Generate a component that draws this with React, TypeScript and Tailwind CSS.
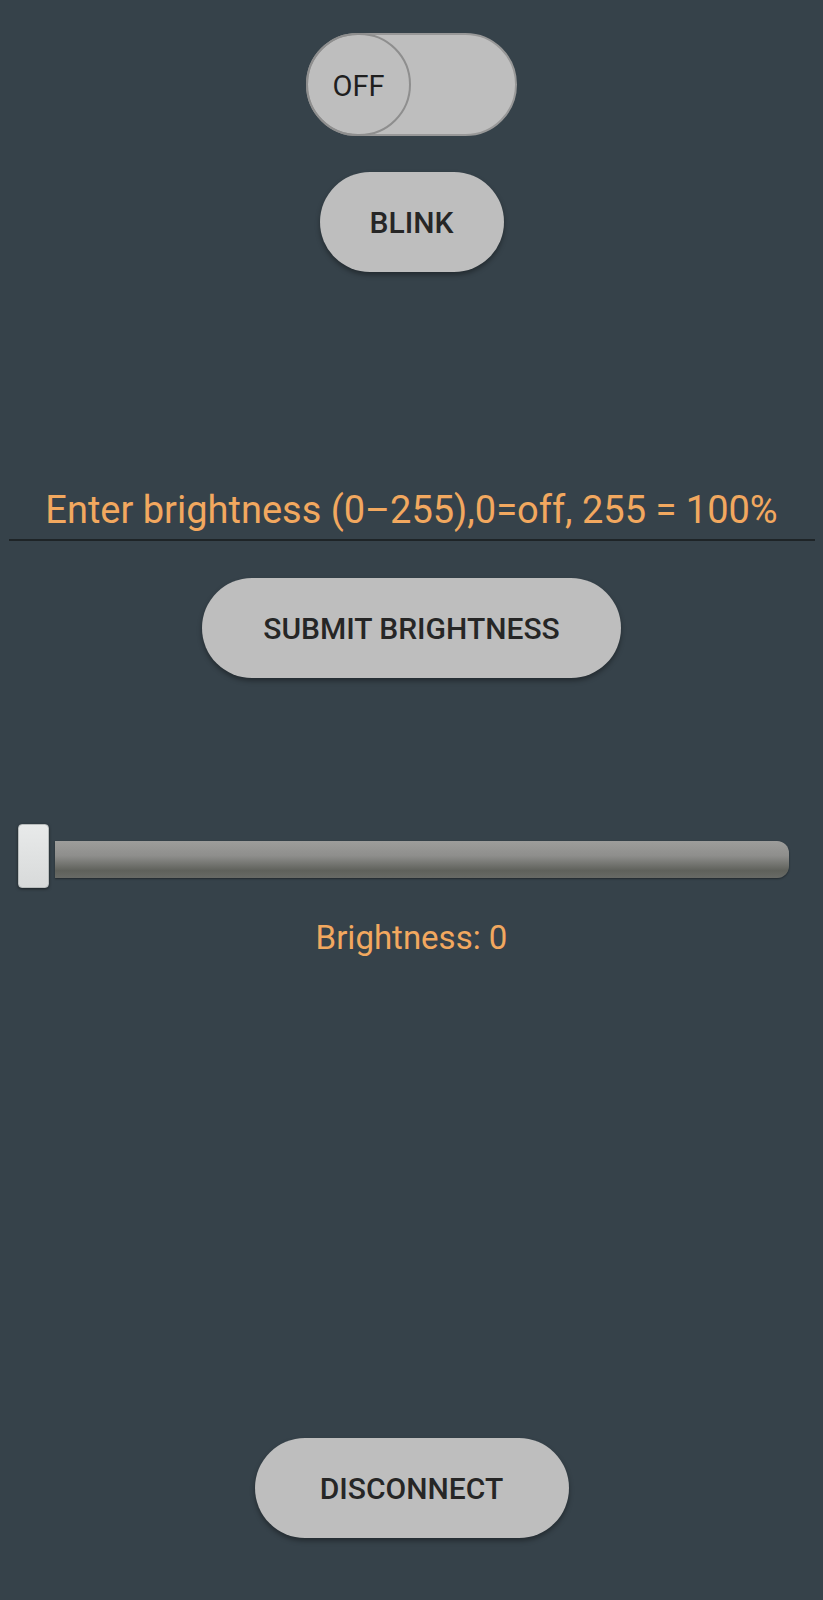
import { useState } from 'react'

function PillButton({ label, width }: { label: string; width: string }) {
  return (
    <button
      className={`${width} h-[100px] rounded-full bg-[#bebebe] text-[#262626] text-[30px] font-medium tracking-[0px] shadow-[0_3px_5px_rgba(0,0,0,0.35)]`}
    >
      {label}
    </button>
  )
}

export default function App() {
  const [value, setValue] = useState(0)
  const [on, setOn] = useState(false)

  return (
    <div
      className="min-h-screen w-full bg-[#36424a] flex flex-col items-center"
      style={{ fontFamily: 'Roboto, "Liberation Sans", sans-serif' }}
    >
      {/* toggle */}
      <button
        onClick={() => setOn(!on)}
        className="mt-[33px] w-[211px] h-[103px] rounded-full bg-[#bebebe] border-2 border-[#989898] flex items-center"
      >
        <span className="-ml-[2px] w-[105px] h-[103px] pt-[5px] rounded-full border-2 border-[#8e8e8e] flex items-center justify-center text-[29px] text-[#1f1f1f]">
          {on ? 'ON' : 'OFF'}
        </span>
      </button>

      <div className="mt-[36px]">
        <PillButton label="BLINK" width="w-[184px]" />
      </div>

      {/* brightness input */}
      <div className="mt-[209px] w-[806px] h-[60px] border-b-2 border-[#1e2427] flex items-center justify-center">
        <span className="text-[38px] text-[#f2a85f] leading-none">
          Enter brightness (0–255),0=off, 255 = 100%
        </span>
      </div>

      <div className="mt-[37px]">
        <PillButton label="SUBMIT BRIGHTNESS" width="w-[419px]" />
      </div>

      {/* slider */}
      <div className="mt-[146px] w-full h-[64px] flex items-start pl-[18px] pr-[34px]">
        <div className="w-[31px] h-[64px] rounded-[4px] bg-gradient-to-b from-[#e8eaea] to-[#d8dada] border border-[#b8bcbc] shadow-[0_1px_3px_rgba(0,0,0,0.5)]" />
        <div className="ml-[6px] mt-[17px] flex-1 h-[37px] rounded-r-[12px] bg-[linear-gradient(to_bottom,#9d9d9b_0%,#8e8e8c_40%,#5f615b_80%,#686a66_100%)] shadow-[0_1px_2px_rgba(0,0,0,0.4)]" />
      </div>

      <div className="mt-[30px] text-[33px] leading-[40px] text-[#f2a85f]">
        Brightness: {value}
      </div>

      <div className="mt-[480px]" onClick={() => setValue(0)}>
        <PillButton label="DISCONNECT" width="w-[314px]" />
      </div>
    </div>
  )
}
